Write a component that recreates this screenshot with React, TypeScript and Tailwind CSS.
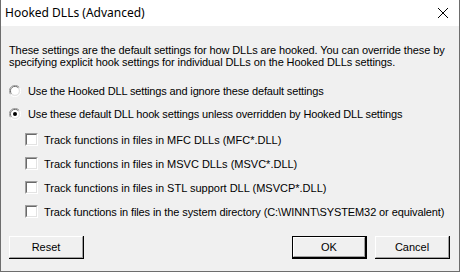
import React from "react";

const Radio = ({ checked }: { checked?: boolean }) => (
  <svg width="12" height="12" viewBox="0 0 12 12" className="shrink-0">
    <path d="M10.5 2.5 A5 5 0 0 0 1.5 9.5" stroke="#a0a0a0" strokeWidth="1" fill="none" />
    <path d="M9.5 3 A4 4 0 0 0 2.5 8.8" stroke="#696969" strokeWidth="1" fill="none" />
    <circle cx="6" cy="6" r="3.7" fill="#ffffff" />
    <path d="M1.5 9.5 A5 5 0 0 0 10.5 2.5" stroke="#ffffff" strokeWidth="1" fill="none" />
    <path d="M2.5 8.8 A4 4 0 0 0 9.5 3" stroke="#e3e3e3" strokeWidth="1" fill="none" />
    {checked && <circle cx="6" cy="6" r="2" fill="#000" />}
  </svg>
);

const Check = () => (
  <div className="w-[13px] h-[13px] shrink-0 border-t border-l border-t-[#a0a0a0] border-l-[#a0a0a0] border-b border-r border-b-white border-r-white">
    <div className="w-full h-full border-t border-l border-t-[#696969] border-l-[#696969] border-b border-r border-b-[#e3e3e3] border-r-[#e3e3e3] bg-white" />
  </div>
);

const Btn = ({ label, def }: { label: string; def?: boolean }) => (
  <div className={`w-[75px] h-[23px] ${def ? "border border-black" : ""}`}>
    <div className="w-full h-full border-r border-b border-r-[#000] border-b-[#000]">
      <div className="w-full h-full border-t border-l border-t-white border-l-white border-r border-b border-r-[#a0a0a0] border-b-[#a0a0a0] bg-[#f0f0f0] flex items-center justify-center text-[11px] text-black">
        {label}
      </div>
    </div>
  </div>
);

export default function App() {
  const font = { fontFamily: '"Liberation Sans", Arial, sans-serif' };
  return (
    <div className="w-[460px] h-[272px] bg-[#f0f0f0] border border-t-0 border-[#6d6d6d] flex flex-col" style={font}>
      <div className="h-[26px] bg-white flex items-center justify-between pl-[4px] pr-[10px] shrink-0">
        <span className="text-[12px] text-black" style={{ fontFamily: '"Noto Sans", "Liberation Sans", sans-serif' }}>
          Hooked DLLs (Advanced)
        </span>
        <svg width="12" height="12" viewBox="0 0 12 12">
          <path d="M1 1 L11 11 M11 1 L1 11" stroke="#000" strokeWidth="1" />
        </svg>
      </div>
      <div className="flex flex-col pl-[8px] pr-[8px] text-[11px] text-black leading-[12px] flex-1">
        <p className="mt-[18px] tracking-[-0.1px]">
          These settings are the default settings for how DLLs are hooked. You can override these by specifying explicit hook settings for individual DLLs on the Hooked DLLs settings.
        </p>
        <div className="flex items-center gap-[7px] mt-[16px] h-[14px] tracking-[-0.15px] whitespace-nowrap">
          <Radio />
          <span>Use the Hooked DLL settings and ignore these default settings</span>
        </div>
        <div className="flex items-center gap-[7px] mt-[9px] h-[14px] tracking-[-0.15px] whitespace-nowrap">
          <Radio checked />
          <span>Use these default DLL hook settings unless overridden by Hooked DLL settings</span>
        </div>
        <div className="flex flex-col pl-[16px] mt-[12px] gap-[11px] whitespace-nowrap">
          <div className="flex items-center gap-[6px] h-[13px]"><Check /><span>Track functions in files in MFC DLLs (MFC*.DLL)</span></div>
          <div className="flex items-center gap-[6px] h-[13px]"><Check /><span>Track functions in files in MSVC DLLs (MSVC*.DLL)</span></div>
          <div className="flex items-center gap-[6px] h-[13px]"><Check /><span>Track functions in files in STL support DLL (MSVCP*.DLL)</span></div>
          <div className="flex items-center gap-[6px] h-[13px]"><Check /><span className="tracking-[-0.1px]">Track functions in files in the system directory (C:\WINNT\SYSTEM32 or equivalent)</span></div>
        </div>
        <div className="flex items-center mt-auto mb-[12px]">
          <Btn label="Reset" />
          <div className="flex-1" />
          <div className="flex gap-[8px] pr-[1px]">
            <Btn label="OK" def />
            <Btn label="Cancel" />
          </div>
        </div>
      </div>
    </div>
  );
}
